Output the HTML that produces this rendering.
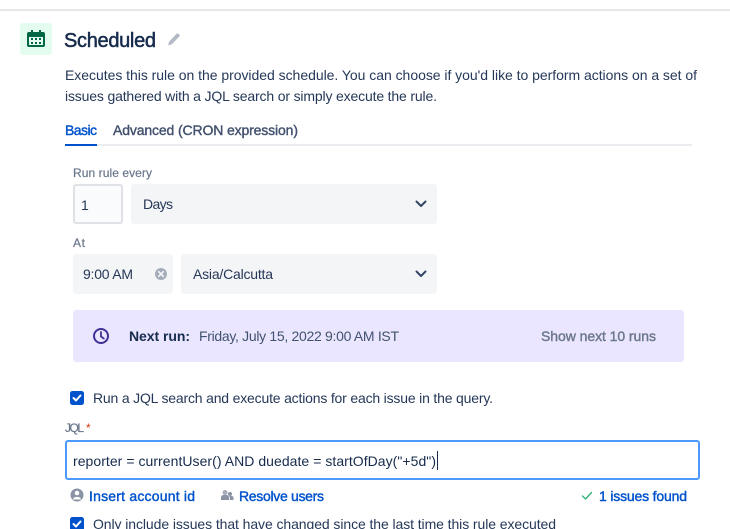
<!DOCTYPE html>
<html><head><meta charset="utf-8"><style>
html,body{margin:0;padding:0;background:#fff;width:730px;height:529px;overflow:hidden}
svg{display:block}
text{font-family:"Liberation Sans",sans-serif;font-size:14px;fill:#253858}
.m{stroke-width:.4px}
</style></head><body>
<svg xmlns="http://www.w3.org/2000/svg" width="730" height="529" viewBox="0 0 730 529">
<rect x="0" y="9" width="730" height="2" fill="#e6e7eb"/>
<rect x="20" y="23" width="32" height="32" rx="3" fill="#e3fcef"/>
<path d="M29 32h2v-2h2v2h6v-2h2v2h2a2 2 0 0 1 2 2v11a2 2 0 0 1-2 2H29a2 2 0 0 1-2-2V34a2 2 0 0 1 2-2z" fill="#006644"/>
<rect x="29" y="37" width="14" height="8" fill="#e3fcef"/>
<g fill="#006644"><rect x="31" y="38" width="2" height="2"/><rect x="35" y="38" width="2" height="2"/><rect x="39" y="38" width="2" height="2"/><rect x="31" y="42" width="2" height="2"/><rect x="35" y="42" width="2" height="2"/><rect x="39" y="42" width="2" height="2"/></g>
<text x="64" y="47" style="font-size:20px;fill:#172b4d;stroke:#172b4d;stroke-width:.5px" textLength="92">Scheduled</text>
<path d="M168 45.500l1.200-4 7.300-7.600a1.500 1.500 0 0 1 2.100 0l.6.600a1.500 1.500 0 0 1 0 2.100l-7.300 7.700z" fill="#b3bac5"/>
<text x="65" y="80" textLength="632">Executes this rule on the provided schedule. You can choose if you'd like to perform actions on a set of</text>
<text x="65" y="101" textLength="372">issues gathered with a JQL search or simply execute the rule.</text>
<text x="65" y="135" style="fill:#0052cc;stroke:#0052cc" class="m" textLength="32">Basic</text>
<text x="113" y="135" style="fill:#42526e;stroke:#42526e" class="m" textLength="185">Advanced (CRON expression)</text>
<rect x="65" y="144" width="627" height="2" fill="#ebecf0"/>
<rect x="65" y="144" width="32" height="2" fill="#0052cc"/>
<text x="73" y="177" style="font-size:12px;fill:#6b778c;stroke:#6b778c;stroke-width:.2px" textLength="79">Run rule every</text>
<rect x="74" y="185" width="48" height="38" rx="2" fill="#fafbfc" stroke="#dfe1e6" stroke-width="2"/>
<text x="81" y="210" textLength="7">1</text>
<rect x="131" y="184" width="306" height="40" rx="3" fill="#f4f5f7"/>
<text x="143" y="209" textLength="30">Days</text>
<path d="M416.500 201.500l4.500 4.500 4.500-4.500" fill="none" stroke="#344563" stroke-width="2" stroke-linecap="round" stroke-linejoin="round"/>
<text x="73" y="247" style="font-size:12px;fill:#6b778c;stroke:#6b778c;stroke-width:.2px" textLength="12">At</text>
<rect x="73" y="254" width="100" height="40" rx="3" fill="#f4f5f7"/>
<text x="83" y="279" textLength="50">9:00 AM</text>
<circle cx="161" cy="274" r="6" fill="#a5adba"/>
<path d="M158.700 271.700l4.600 4.600m0-4.600l-4.600 4.600" stroke="#f4f5f7" stroke-width="1.600" stroke-linecap="round"/>
<rect x="181" y="254" width="256" height="40" rx="3" fill="#f4f5f7"/>
<text x="193" y="279" textLength="80">Asia/Calcutta</text>
<path d="M416.500 271.500l4.500 4.500 4.500-4.500" fill="none" stroke="#344563" stroke-width="2" stroke-linecap="round" stroke-linejoin="round"/>
<rect x="73" y="310" width="611" height="52" rx="3" fill="#eae6ff"/>
<circle cx="101" cy="336" r="7" fill="none" stroke="#403294" stroke-width="2"/>
<path d="M101 332v4.500l2.800 2" fill="none" stroke="#403294" stroke-width="1.800" stroke-linecap="round"/>
<text x="129" y="341" style="font-weight:700;fill:#172b4d" textLength="61">Next run:</text>
<text x="199" y="341" style="fill:#42526e" textLength="200">Friday, July 15, 2022 9:00 AM IST</text>
<text x="541" y="341" style="fill:#6b778c;stroke:#6b778c" class="m" textLength="115">Show next 10 runs</text>
<rect x="70" y="391" width="14" height="14" rx="2.500" fill="#0052cc"/>
<path d="M73.500 398l2.500 2.500 4.500-5" fill="none" stroke="#fff" stroke-width="2" stroke-linecap="round" stroke-linejoin="round"/>
<text x="93" y="403" textLength="400">Run a JQL search and execute actions for each issue in the query.</text>
<text x="65" y="432" style="font-size:12px;fill:#6b778c;stroke:#6b778c;stroke-width:.2px" textLength="19">JQL</text>
<text x="86" y="432" style="font-size:12px;fill:#de350b">*</text>
<rect x="66" y="441" width="633" height="38" rx="2" fill="#fff" stroke="#4c9aff" stroke-width="2"/>
<text x="73" y="466" style="fill:#172b4d" textLength="363">reporter = currentUser() AND duedate = startOfDay("+5d")</text>
<rect x="437" y="451" width="1" height="19" fill="#172b4d"/>
<circle cx="77" cy="495" r="6.500" fill="#8993a4"/>
<circle cx="77" cy="493" r="2.300" fill="#fff"/>
<path d="M72.800 499.500a4.300 3.300 0 0 1 8.400 0z" fill="#fff"/>
<text x="89" y="501" style="fill:#0052cc;stroke:#0052cc" class="m" textLength="106">Insert account id</text>
<circle cx="225" cy="492.500" r="2.500" fill="#a5adba"/>
<circle cx="230" cy="494" r="2" fill="#8993a4"/>
<path d="M221 500v-2.500a2.500 2.500 0 0 1 2.500-2.500h3a2.500 2.500 0 0 1 2.500 2.500v2.500zM229.800 500v-3l-.8-1h2.500a2 2 0 0 1 2 2v2z" fill="#8993a4"/>
<text x="239" y="501" style="fill:#0052cc;stroke:#0052cc" class="m" textLength="85">Resolve users</text>
<path d="M582.500 496l3 3 6-6.500" fill="none" stroke="#36b37e" stroke-width="1.400" stroke-linecap="round" stroke-linejoin="round"/>
<text x="599" y="501" style="fill:#0052cc;stroke:#0052cc" class="m" textLength="88">1 issues found</text>
<rect x="70" y="517" width="14" height="14" rx="2.500" fill="#0052cc"/>
<path d="M73.500 524l2.500 2.500 4.500-5" fill="none" stroke="#fff" stroke-width="2" stroke-linecap="round" stroke-linejoin="round"/>
<text x="93" y="529" textLength="463">Only include issues that have changed since the last time this rule executed</text>
</svg>
</body></html>
